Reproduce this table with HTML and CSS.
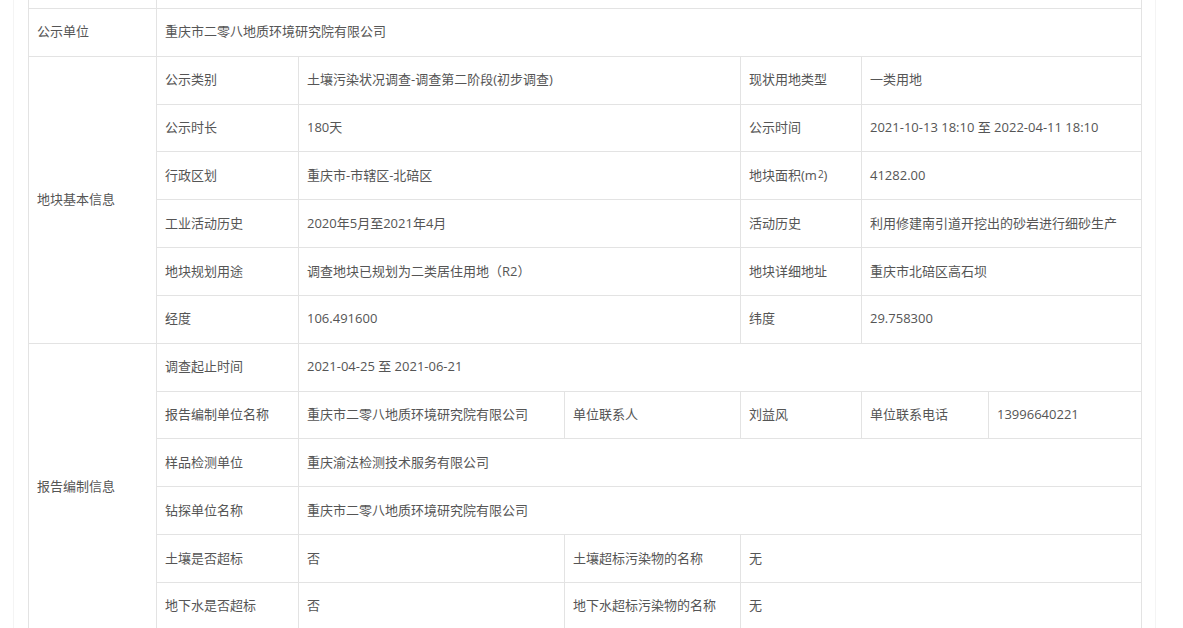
FILE: index.html
```html
<!DOCTYPE html>
<html lang="zh-CN">
<head>
<meta charset="utf-8">
<title>地块信息公示</title>
<link rel="stylesheet" href="styles.css">
</head>
<body>
<div class="panel">
  <div class="sheet">
    <div class="cell top"></div>
    <div class="cell top span6"></div>

    <div class="cell">公示单位</div>
    <div class="cell span6">重庆市二零八地质环境研究院有限公司</div>

    <div class="cell group g6">地块基本信息</div>
    <div class="cell">公示类别</div>
    <div class="cell span2">土壤污染状况调查-调查第二阶段(初步调查)</div>
    <div class="cell">现状用地类型</div>
    <div class="cell span2">一类用地</div>

    <div class="cell">公示时长</div>
    <div class="cell span2">180天</div>
    <div class="cell">公示时间</div>
    <div class="cell span2">2021-10-13 18:10 至 2022-04-11 18:10</div>

    <div class="cell">行政区划</div>
    <div class="cell span2">重庆市-市辖区-北碚区</div>
    <div class="cell">地块面积(m<sup>2</sup>)</div>
    <div class="cell span2">41282.00</div>

    <div class="cell">工业活动历史</div>
    <div class="cell span2">2020年5月至2021年4月</div>
    <div class="cell">活动历史</div>
    <div class="cell span2">利用修建南引道开挖出的砂岩进行细砂生产</div>

    <div class="cell">地块规划用途</div>
    <div class="cell span2">调查地块已规划为二类居住用地（R2）</div>
    <div class="cell">地块详细地址</div>
    <div class="cell span2">重庆市北碚区高石坝</div>

    <div class="cell">经度</div>
    <div class="cell span2">106.491600</div>
    <div class="cell">纬度</div>
    <div class="cell span2">29.758300</div>

    <div class="cell group g6">报告编制信息</div>
    <div class="cell">调查起止时间</div>
    <div class="cell span5">2021-04-25 至 2021-06-21</div>

    <div class="cell">报告编制单位名称</div>
    <div class="cell">重庆市二零八地质环境研究院有限公司</div>
    <div class="cell">单位联系人</div>
    <div class="cell">刘益风</div>
    <div class="cell">单位联系电话</div>
    <div class="cell">13996640221</div>

    <div class="cell">样品检测单位</div>
    <div class="cell span5">重庆渝法检测技术服务有限公司</div>

    <div class="cell">钻探单位名称</div>
    <div class="cell span5">重庆市二零八地质环境研究院有限公司</div>

    <div class="cell">土壤是否超标</div>
    <div class="cell">否</div>
    <div class="cell">土壤超标污染物的名称</div>
    <div class="cell span3">无</div>

    <div class="cell">地下水是否超标</div>
    <div class="cell">否</div>
    <div class="cell">地下水超标污染物的名称</div>
    <div class="cell span3">无</div>
  </div>
</div>
</body>
</html>
```
FILE: styles.css
```css
html, body {
  margin: 0;
  padding: 0;
  background: #fff;
  overflow: hidden;
  height: 628px;
}

body {
  font-family: "Open Sans", "Noto Sans CJK SC", sans-serif;
  font-size: 13px;
  color: #555;
}

.panel {
  margin-left: 13px;
  width: 1143px;
  height: 640px;
  border-left: 1px solid #f4f4f4;
  border-right: 1px solid #f4f4f4;
  padding-left: 14px;
  box-sizing: border-box;
}

.sheet {
  display: grid;
  grid-template-columns: 128px 142px 266px 176px 121px 127px 153px;
  grid-template-rows: 9px repeat(13, 47.83px);
  width: 1114px;
  border-left: 1px solid #e3e3e3;
  box-sizing: border-box;
}

.cell {
  border-right: 1px solid #e3e3e3;
  border-bottom: 1px solid #e3e3e3;
  padding: 0 0 2px 8px;
  display: flex;
  align-items: center;
  white-space: nowrap;
  overflow: hidden;
  box-sizing: border-box;
  line-height: 18px;
}

.cell sup {
  font-size: 10px;
  line-height: 0;
  position: relative;
  top: -1px;
  vertical-align: super;
  padding-left: 1px;
}

.span2 { grid-column: span 2; }
.span3 { grid-column: span 3; }
.span5 { grid-column: span 5; }
.span6 { grid-column: span 6; }
.g6 { grid-row: span 6; }
```
